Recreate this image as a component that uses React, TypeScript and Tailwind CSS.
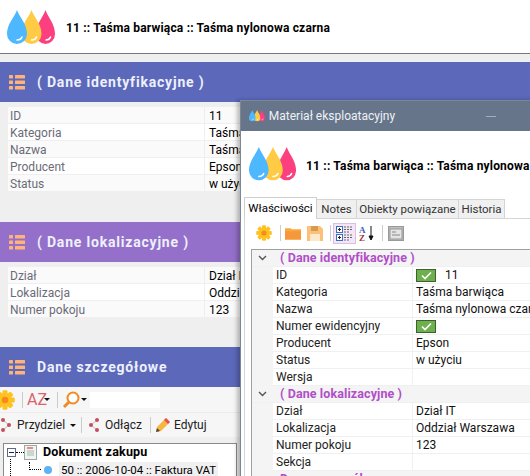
import type { ReactNode } from "react";

const ui = { fontFamily: 'Roboto,"Noto Sans",sans-serif' };

function Drops({ size = 1 }: { size?: number }) {
  const d = "M10 0 C13 8 20 14 20 24 A10 10 0 0 1 0 24 C0 14 7 8 10 0Z";
  return (
    <svg width={48 * size} height={34 * size} viewBox="0 0 48 34" className="shrink-0">
      <path d={d} transform="translate(29 0) scale(0.95 1)" fill="#fb3f7f" />
      <path d={d} transform="translate(14.500 0)" fill="#ffcb45" />
      <path d={d} fill="#4db7ff" />
      <path d="M10 30q4 0 5-3" stroke="#fff" strokeWidth="1.5" fill="none" strokeLinecap="round" />
      <path d="M24.500 30q4 0 5-3" stroke="#fff" strokeWidth="1.5" fill="none" strokeLinecap="round" />
      <path d="M39 30q3.500 0 4.500-3" stroke="#fff" strokeWidth="1.500" fill="none" strokeLinecap="round" />
    </svg>
  );
}

function ListIcon() {
  return (
    <svg width="16" height="15" viewBox="0 0 16 15" className="shrink-0" fill="#ffb27a">
      <rect x="0" y="0" width="4" height="3.500" rx="0.5" />
      <rect x="6" y="0" width="10" height="3.500" rx="0.5" />
      <rect x="0" y="5.500" width="4" height="3.500" rx="0.5" />
      <rect x="6" y="5.500" width="10" height="3.500" rx="0.5" />
      <rect x="0" y="11" width="4" height="3.500" rx="0.5" />
      <rect x="6" y="11" width="10" height="3.500" rx="0.5" />
    </svg>
  );
}

function Gear({ s = 16 }: { s?: number }) {
  return (
    <svg width={s} height={s} viewBox="0 0 16 16" className="shrink-0">
      <g fill="#ffc21f">
        {[0, 45, 90, 135, 180, 225, 270, 315].map((a) => (
          <rect key={a} x="6" y="0.2" width="4" height="4" rx="1" transform={`rotate(${a} 8 8)`} />
        ))}
        <circle cx="8" cy="8" r="5.6" />
      </g>
      <circle cx="8" cy="8" r="2.6" fill="#f58a1f" />
    </svg>
  );
}

function Caret() {
  return (
    <svg width="6" height="3" viewBox="0 0 6 3" className="shrink-0"><path d="M0 0h6L3 3z" fill="#111" /></svg>
  );
}

function Band({ title, color, mt }: { title: string; color: string; mt: string }) {
  return (
    <div className={`h-10 flex items-center pl-[9px] ${color} ${mt}`}>
      <ListIcon />
      <span className="ml-[12px] text-[14px] font-bold text-[#eef0fb] tracking-[0.8px]">{title}</span>
    </div>
  );
}

function InfoRows({ rows }: { rows: [string, string][] }) {
  return (
    <div className="mt-[5px] ml-2 flex flex-col gap-px">
      {rows.map(([k, v], i) => (
        <div key={k} className="flex h-4 text-[12px] leading-[18px]">
          <div className={`w-[196px] shrink-0 pl-0.5 text-[#6b6b78] ${i % 2 ? "bg-white" : "bg-[#fafafa]"}`}>{k}</div>
          <div className={`ml-px flex-1 pl-1 text-black whitespace-nowrap ${i % 2 ? "bg-white" : "bg-[#fafafa]"}`}>{v}</div>
        </div>
      ))}
    </div>
  );
}

function Check() {
  return (
    <span className="inline-flex w-5 h-[13px] items-center justify-center bg-[#6fb04e] border border-[#3f5f30] shrink-0">
      <svg width="11" height="9" viewBox="0 0 11 9"><path d="M1 4.500 4 7.500 10 1.500" stroke="#fff" strokeWidth="1.600" fill="none" /></svg>
    </span>
  );
}

function PropHead({ title }: { title: string }) {
  return (
    <div className="flex h-[17px] items-center bg-[#f4f4f4] border-b border-[#f0f0f0]">
      <svg width="9" height="6" viewBox="0 0 9 6" className="ml-[6px] shrink-0"><path d="M1 1l3.500 3.500L8 1" stroke="#555" strokeWidth="1.400" fill="none" /></svg>
      <span className="ml-[13px] text-[#b04fc8] text-[12.5px] font-bold tracking-[0.1px] whitespace-nowrap">{title}</span>
    </div>
  );
}

function PropRow({ k, children }: { k: string; children?: ReactNode }) {
  return (
    <div className="flex h-[17px] bg-[#f4f4f4] text-[12px] leading-[17px]">
      <div className="w-[140px] shrink-0 ml-[21px] pl-[3px] bg-white border-b border-[#f0f0f0] border-r text-[#222]">{k}</div>
      <div className="flex-1 pl-[3px] bg-white border-b border-[#f0f0f0] flex items-center gap-[9px] whitespace-nowrap text-[#111]">{children}</div>
    </div>
  );
}

function Tab({ label, w, active }: { label: string; w: string; active?: boolean }) {
  return active ? (
    <div className={`h-[22px] -mb-px z-10 text-center bg-white border border-b-0 border-[#cfcfcf] text-black leading-[20px] ${w}`}>{label}</div>
  ) : (
    <div className={`h-[19px] text-center bg-[#f0f0f0] border border-b-0 border-l-0 border-[#d5d5d5] text-[#333] leading-[19px] ${w}`}>{label}</div>
  );
}

export default function App() {
  return (
    <div className="relative w-[530px] h-[476px] overflow-hidden bg-[#efefef]" style={ui}>
      <div className="h-[54px] bg-white border-b border-[#7a7a7a] flex items-center pl-[7px]">
        <Drops />
        <span className="ml-[11px] pt-[3px] text-[12px] font-bold text-black tracking-[0.18px]">
          11 :: Taśma barwiąca :: Taśma nylonowa czarna
        </span>
      </div>
      <Band title="( Dane identyfikacyjne )" color="bg-[#5c69bb]" mt="mt-2" />
      <InfoRows rows={[["ID", "11"], ["Kategoria", "Taśma barwiąca"], ["Nazwa", "Taśma nylonowa czarna"], ["Producent", "Epson"], ["Status", "w użyciu"]]} />
      <Band title="( Dane lokalizacyjne )" color="bg-[#9470ca]" mt="mt-[31px]" />
      <InfoRows rows={[["Dział", "Dział IT"], ["Lokalizacja", "Oddział Warszawa"], ["Numer pokoju", "123"]]} />
      <Band title="Dane szczegółowe" color="bg-[#5c69bb]" mt="mt-[30px]" />

      <div className="h-[25px] bg-[#f6f6f6] flex items-center">
        <div className="-ml-[5px]"><Gear s={20} /></div>
        <div className="ml-[7px] w-px h-4 bg-[#ccc]" />
        <span className="ml-1 text-[16px] leading-4 text-[#d9636b] w-[17px]">AZ</span>
        <Caret />
        <div className="ml-[7px] w-px h-4 bg-[#ccc]" />
        <svg width="18" height="18" viewBox="0 0 18 18" className="ml-1 shrink-0">
          <circle cx="11" cy="7" r="5.500" fill="#fff" stroke="#f08a24" strokeWidth="2" />
          <path d="M7 11 2 16" stroke="#f08a24" strokeWidth="3" />
        </svg>
        <div className="ml-px"><Caret /></div>
        <div className="ml-[3px] w-[70px] h-4 bg-white" />
      </div>
      <div className="h-[25px] bg-[#f6f6f6] flex items-center text-[12px] text-[#222] border-t border-[#ececec]">
        <svg width="12" height="14" viewBox="0 0 12 14" className="shrink-0"><path d="M3 2l6 5-6 5" stroke="#bbb" fill="none" /><g fill="#c44d5e"><circle cx="3" cy="2" r="2" /><circle cx="9" cy="7" r="2" /><circle cx="3" cy="12" r="2" /></g></svg>
        <span className="ml-[5px] w-[47px]">Przydziel</span>
        <div className="ml-1.5"><Caret /></div>
        <div className="ml-[5px] w-px h-4 bg-[#ccc]" />
        <svg width="12" height="14" viewBox="0 0 12 14" className="ml-[6px] shrink-0"><path d="M9 2 3 7l6 5" stroke="#bbb" fill="none" /><g fill="#c44d5e"><circle cx="9" cy="2" r="2" /><circle cx="3" cy="7" r="2" /><circle cx="9" cy="12" r="2" /></g></svg>
        <span className="ml-[5px] w-[37px]">Odłącz</span>
        <div className="ml-2 w-px h-4 bg-[#ccc]" />
        <svg width="16" height="16" viewBox="0 0 16 16" className="ml-1 shrink-0"><path d="M1 15l1-5L11 1l4 4-9 9z" fill="#f6b73c" /><path d="M11 1l4 4-2 2-4-4z" fill="#e8505b" /><path d="M1 15l1-4 3 3z" fill="#444" /></svg>
        <span className="ml-[3px]">Edytuj</span>
      </div>
      <div className="mt-[6px] ml-[3px] mr-[293px] h-[40px] bg-white border border-[#8a8a8a] text-[12px] pl-[3px] overflow-hidden relative">
        <div className="flex items-center h-[17px]">
          <span className="w-[7px] h-[7px] box-content border border-[#5a6a8a] flex items-center justify-center"><span className="w-[5px] h-px bg-[#223]" /></span>
          <span className="w-[8px] border-t border-dotted border-black" />
          <svg width="13" height="15" viewBox="0 0 13 15" className="shrink-0"><rect x="0.5" y="0.5" width="12" height="14" fill="#f4f4ee" stroke="#9aa" /><rect x="3" y="2" width="6" height="2" fill="#e88" /><path d="M3 6h7M3 8h7M3 10h7" stroke="#9bb" /></svg>
          <span className="ml-[6px] font-bold text-black text-[12.5px] tracking-[0.2px]">Dokument zakupu</span>
        </div>
        <div className="flex items-center h-[17px]">
          <span className="ml-[3px] w-px h-[17px] -mt-[5px] border-l border-dotted border-black" />
          <span className="ml-[18px] w-[12px] h-2 border-l border-b border-dotted border-black -mt-2" />
          <span className="ml-[3px] w-2 h-2 rounded-full bg-[#5db3f5]" />
          <span className="ml-[7px] px-0.5 bg-[#f0f0f0] whitespace-nowrap text-[11.5px] leading-4">50 :: 2006-10-04 :: Faktura VAT</span>
        </div>
      </div>

      {/* floating window */}
      <div className="absolute left-[240px] top-[100px] w-[300px] h-[390px] bg-white border-l border-t border-[#7c8696] shadow-[-3px_0_4px_rgba(0,0,0,0.25)]">
        <div className="h-[30px] bg-[#66758a] flex items-center pl-2">
          <Drops size={0.33} />
          <span className="ml-[4px] text-[12px] text-[#eef1f5] w-[125px] whitespace-nowrap">Materiał eksploatacyjny</span>
          <span className="ml-[92px] w-2.5 h-px bg-[#a3adbb]" />
        </div>
        <div className="h-[66px] flex items-center pl-2">
          <Drops size={0.98} />
          <span className="ml-2.5 pt-1 text-[12px] font-bold text-black tracking-[0.18px] whitespace-nowrap">
            11 :: Taśma barwiąca :: Taśma nylonowa czarna
          </span>
        </div>
        <div className="flex items-end ml-[3px] text-[11.5px]">
          <Tab label="Właściwości" w="w-[73px]" active />
          <Tab label="Notes" w="w-[40px]" />
          <Tab label="Obiekty powiązane" w="w-[102px]" />
          <Tab label="Historia" w="w-[46px]" />
        </div>
        <div className="ml-[3px] border border-[#d5d5d5] pl-[6px] pt-0 h-[300px]">
          <div className="h-[30px] pb-[2px] flex items-center">
            <div className="ml-[5px]"><Gear /></div>
            <div className="ml-2 w-px h-4 bg-[#ccc]" />
            <svg width="16" height="14" viewBox="0 0 17 14" className="ml-[4px] shrink-0"><path d="M0 2h6l1 1h10v11H0z" fill="#fba93f" /><path d="M0 5h17v9H0z" fill="#f6983a" /></svg>
            <svg width="16" height="15" viewBox="0 0 16 15" className="ml-[6px] shrink-0"><path d="M0 0h13l3 3v12H0z" fill="#fbc178" /><rect x="4" y="0" width="7" height="5" fill="#d69a50" /><rect x="3" y="8" width="10" height="7" fill="#fde9cc" /></svg>
            <div className="ml-[7px] w-px h-4 bg-[#ccc]" />
            <div className="ml-[2px] w-[23px] h-[21px] bg-[#f3e6f7] border border-[#d9bfe3] flex items-center justify-center">
              <svg width="17" height="17" viewBox="0 0 17 17"><rect x="0.5" y="1.5" width="6" height="6" fill="#fff" stroke="#3b6fc2" /><rect x="0.5" y="9.5" width="6" height="6" fill="#fff" stroke="#3b6fc2" /><path d="M2 4.500h3M3.500 3v3M2 12.500h3M3.500 11v3" stroke="#222" /><path d="M8 2h9M8 4.500h9M8 7h6M8 10h9M8 12.500h9M8 15h6" stroke="#666" strokeDasharray="2 1" /></svg>
            </div>
            <svg width="17" height="17" viewBox="0 0 17 17" className="ml-[3px] shrink-0"><text x="0" y="8" fontSize="9" fontWeight="700" fill="#3a5fbf" fontFamily="Liberation Serif">A</text><text x="0" y="16" fontSize="9" fontWeight="700" fill="#a23a3a" fontFamily="Liberation Serif">Z</text><path d="M12 1v13M10 11l2 4 2-4z" stroke="#111" fill="#111" /></svg>
            <div className="ml-1.5 w-px h-4 bg-[#ccc]" />
            <svg width="16" height="15" viewBox="0 0 16 15" className="ml-[5px] shrink-0"><rect x="0.5" y="0.5" width="15" height="14" fill="#bdbdbd" stroke="#999" /><rect x="2" y="3" width="12" height="10" fill="#e4e4e4" stroke="#999" /><path d="M4 6h4M4 9h8" stroke="#888" /></svg>
          </div>
          <div className="border-t border-l border-[#a0a0a0]">
            <PropHead title="( Dane identyfikacyjne )" />
            <PropRow k="ID"><Check /><span>11</span></PropRow>
            <PropRow k="Kategoria">Taśma barwiąca</PropRow>
            <PropRow k="Nazwa">Taśma nylonowa czarna</PropRow>
            <PropRow k="Numer ewidencyjny"><Check /></PropRow>
            <PropRow k="Producent">Epson</PropRow>
            <PropRow k="Status">w użyciu</PropRow>
            <PropRow k="Wersja" />
            <PropHead title="( Dane lokalizacyjne )" />
            <PropRow k="Dział">Dział IT</PropRow>
            <PropRow k="Lokalizacja">Oddział Warszawa</PropRow>
            <PropRow k="Numer pokoju">123</PropRow>
            <PropRow k="Sekcja" />
            <PropHead title="Dane szczegółowe" />
          </div>
        </div>
      </div>
    </div>
  );
}
